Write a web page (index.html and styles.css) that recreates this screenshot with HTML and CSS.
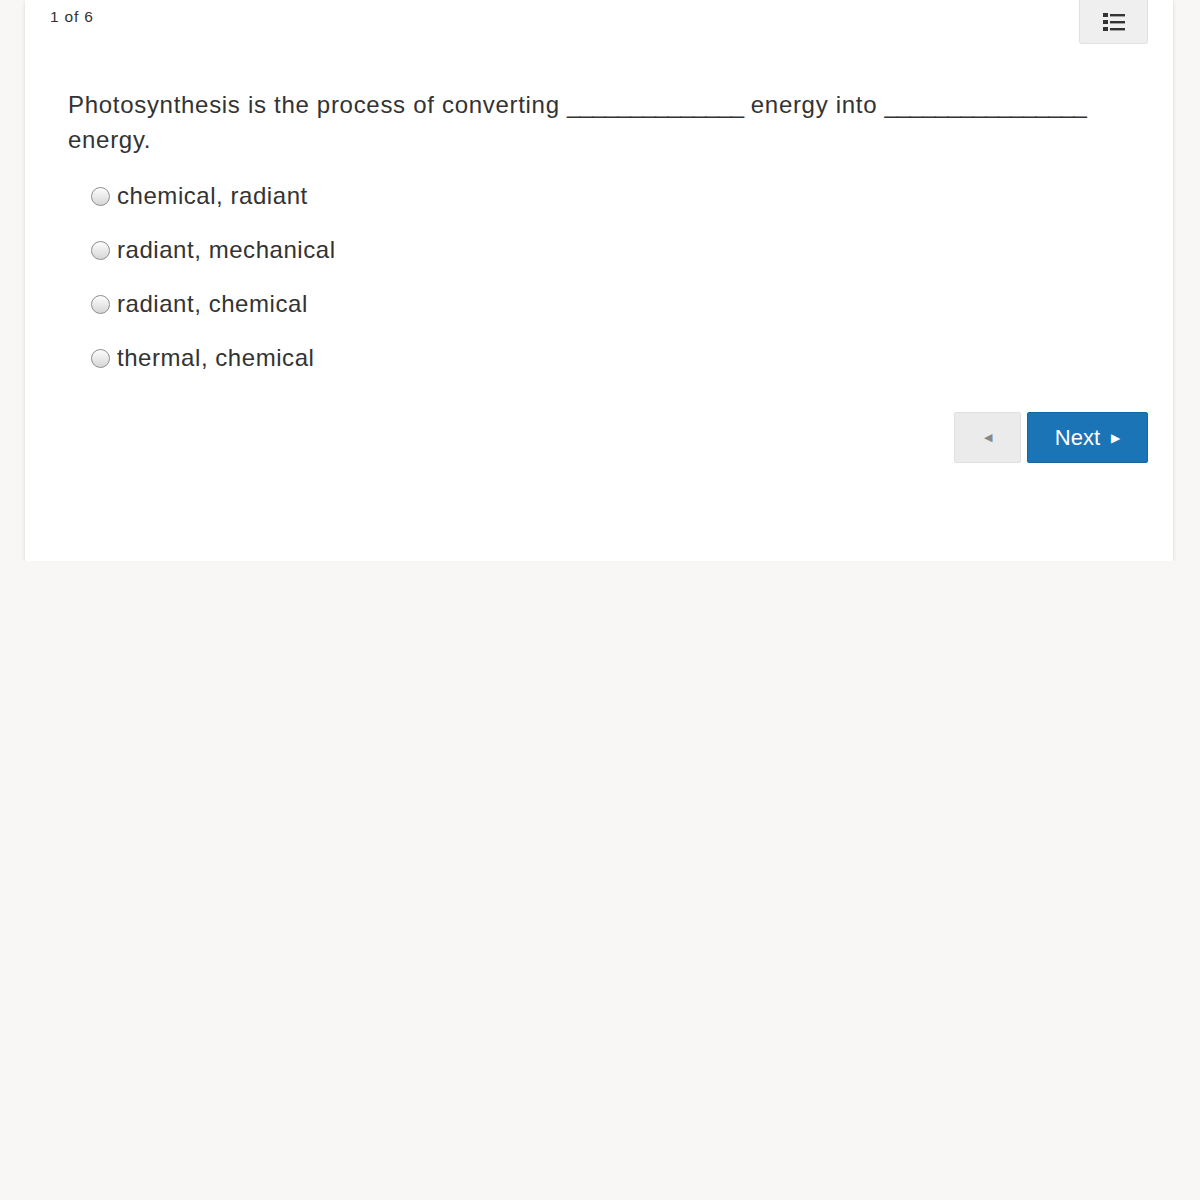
FILE: index.html
```html
<!DOCTYPE html>
<html>
<head>
<meta charset="utf-8">
<link rel="stylesheet" href="styles.css">
</head>
<body>
<div class="card">
  <div class="topbar">
    <span class="counter">1 of 6</span>
    <button class="menu-btn" aria-label="Question list">
      <svg width="22" height="20" viewBox="0 0 22 20">
        <rect x="0" y="1" width="5" height="4" fill="#333"/>
        <rect x="7" y="2" width="15" height="2.4" fill="#333"/>
        <rect x="0" y="8" width="5" height="4" fill="#333"/>
        <rect x="7" y="9" width="15" height="2.4" fill="#333"/>
        <rect x="0" y="15" width="5" height="4" fill="#333"/>
        <rect x="7" y="16" width="15" height="2.4" fill="#333"/>
      </svg>
    </button>
  </div>
  <div class="question">
    <p class="prompt">Photosynthesis is the process of converting <span class="blank">______________</span> energy into <span class="blank">________________</span> energy.</p>
    <ul class="options">
      <li><span class="radio"></span>chemical, radiant</li>
      <li><span class="radio"></span>radiant, mechanical</li>
      <li><span class="radio"></span>radiant, chemical</li>
      <li><span class="radio"></span>thermal, chemical</li>
    </ul>
  </div>
  <div class="nav">
    <button class="prev">&#9664;</button>
    <button class="next">Next <span class="arrow">&#9654;</span></button>
  </div>
</div>
</body>
</html>
```

FILE: styles.css
```css
html, body {
  margin: 0;
  padding: 0;
  background: #f8f7f5;
  font-family: "Liberation Sans", Arial, sans-serif;
  color: #333;
}
.card {
  margin: 0 27px 0 25px;
  background: #fff;
  box-shadow: 0 1px 4px rgba(0,0,0,0.13);
  height: 561px;
  box-sizing: border-box;
  padding: 0 25px 0 25px;
}
.topbar {
  display: flex;
  justify-content: space-between;
  align-items: flex-start;
  height: 44px;
}
.counter {
  font-size: 15.5px;
  letter-spacing: 0.8px;
  margin-top: 8px;
  color: #333;
}
.menu-btn {
  width: 69px;
  height: 44px;
  background: #efefef;
  border: 1px solid #e0e0e0;
  border-top: none;
  border-radius: 0 0 3px 3px;
  display: flex;
  align-items: center;
  justify-content: center;
  padding: 0;
}
.question {
  padding: 0 18px;
}
.prompt {
  font-size: 24px;
  letter-spacing: 0.7px;
  line-height: 35px;
  margin: 43px 0 0 0;
  color: #333;
}
.blank {
  letter-spacing: -0.75px;
}
.options {
  list-style: none;
  margin: 12px 0 0 0;
  padding: 0 0 0 23px;
}
.options li {
  font-size: 24px;
  letter-spacing: 0.55px;
  height: 54px;
  display: flex;
  align-items: center;
  color: #333;
}
.radio {
  width: 19px;
  height: 19px;
  border-radius: 50%;
  border: 1px solid #8e8e8e;
  background: linear-gradient(#fdfdfd, #d6d6d6);
  margin-right: 7px;
  box-sizing: border-box;
  flex: none;
}
.nav {
  display: flex;
  justify-content: flex-end;
  gap: 6px;
  margin-top: 27px;
}
.nav button {
  height: 51px;
  border-radius: 2px;
  font-family: inherit;
  padding: 0;
}
.prev {
  width: 67px;
  background: #ebebeb;
  border: 1px solid #e0e0e0;
  color: #888;
  font-size: 11px;
}
.next {
  width: 121px;
  background: #1a74b6;
  border: 1px solid #16679f;
  color: #fff;
  font-size: 22px;
  padding-right: 4px;
}
.next .arrow {
  font-size: 12px;
  vertical-align: 3px;
  margin-left: 5px;
}
```
